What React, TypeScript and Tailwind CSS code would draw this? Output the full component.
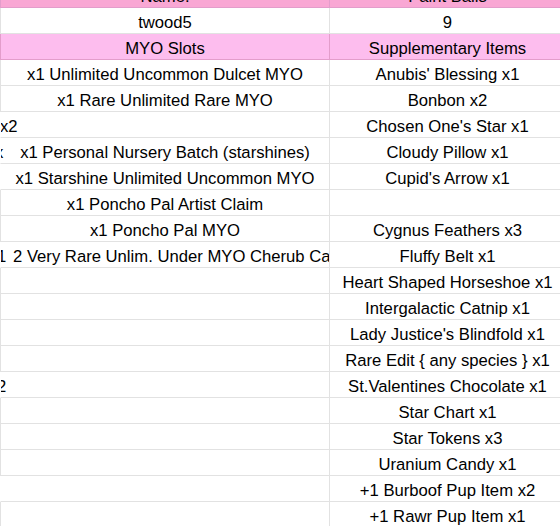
import React from 'react';

type Row = {
  left?: string;
  right?: string;
  // text spilling in from the column on the left
  spill?: { text: string; offset: string };
  // left-aligned overflowing text, clipped at the column edge
  clipped?: string;
  noLeftLine?: boolean;
  kind?: 'head' | 'sub';
};

const ROWS: Row[] = [
  { left: 'Name:', right: 'Paint Balls', kind: 'head' },
  { left: 'twood5', right: '9' },
  { left: 'MYO Slots', right: 'Supplementary Items', kind: 'sub' },
  { left: 'x1 Unlimited Uncommon Dulcet MYO', right: "Anubis' Blessing x1" },
  { left: 'x1 Rare Unlimited Rare MYO', right: 'Bonbon x2' },
  { spill: { text: 'x2', offset: 'ml-[-1px]' }, right: "Chosen One's Star x1", noLeftLine: true },
  { left: 'x1 Personal Nursery Batch (starshines)', right: 'Cloudy Pillow x1', spill: { text: 'x', offset: 'ml-[-6px]' }, noLeftLine: true },
  { left: 'x1 Starshine Unlimited Uncommon MYO', right: "Cupid's Arrow x1", noLeftLine: true },
  { left: 'x1 Poncho Pal Artist Claim' },
  { left: 'x1 Poncho Pal MYO', right: 'Cygnus Feathers x3' },
  {
    spill: { text: '1', offset: 'ml-[-4px]' },
    clipped: '2 Very Rare Unlim. Under MYO Cherub Cat',
    right: 'Fluffy Belt x1',
    noLeftLine: true,
  },
  { right: 'Heart Shaped Horseshoe x1' },
  { right: 'Intergalactic Catnip x1' },
  { right: "Lady Justice's Blindfold x1" },
  { right: 'Rare Edit { any species } x1' },
  { spill: { text: '2', offset: 'ml-[-4px]' }, right: 'St.Valentines Chocolate x1', noLeftLine: true },
  { right: 'Star Chart x1' },
  { right: 'Star Tokens x3' },
  { right: 'Uranium Candy x1' },
  { right: '+1 Burboof Pup Item x2', noLeftLine: true },
  { right: '+1 Rawr Pup Item x1' },
];

function SheetRow({ row }: { row: Row }) {
  const bg = row.kind === 'head' ? 'bg-[#f9a7d4]' : row.kind === 'sub' ? 'bg-[#fdbdee]' : 'bg-white';
  const line = row.kind ? 'border-[#e39dcb]' : 'border-[#e2e2e2]';

  return (
    <div className={`flex h-[26px] shrink-0 ${bg}`}>
      <div
        className={`relative w-[330px] shrink-0 overflow-hidden whitespace-nowrap border-r border-b ${line} ${
          row.noLeftLine ? 'border-l border-l-transparent' : 'border-l'
        }`}
      >
        {row.spill && (
          <div className="absolute inset-y-0 left-0 pt-[5px] leading-[19px]">
            <span className={`block ${row.spill.offset}`}>{row.spill.text}</span>
          </div>
        )}
        {row.clipped && <div className="pt-[5px] pl-[12px] leading-[19px]">{row.clipped}</div>}
        {row.left && <div className="pt-[5px] text-center leading-[19px]">{row.left}</div>}
      </div>
      <div className={`w-[236px] shrink-0 overflow-hidden whitespace-nowrap border-r border-b ${line}`}>
        <div className="pt-[5px] text-center leading-[19px]">{row.right}</div>
      </div>
    </div>
  );
}

export default function App() {
  return (
    <div
      className="relative h-[526px] w-[560px] overflow-hidden bg-white text-[16.67px] text-black"
      style={{ fontFamily: '"Liberation Sans", Arial, sans-serif' }}
    >
      <div className="mt-[-18px] flex flex-col">
        {ROWS.map((row, i) => (
          <SheetRow key={i} row={row} />
        ))}
      </div>
    </div>
  );
}
